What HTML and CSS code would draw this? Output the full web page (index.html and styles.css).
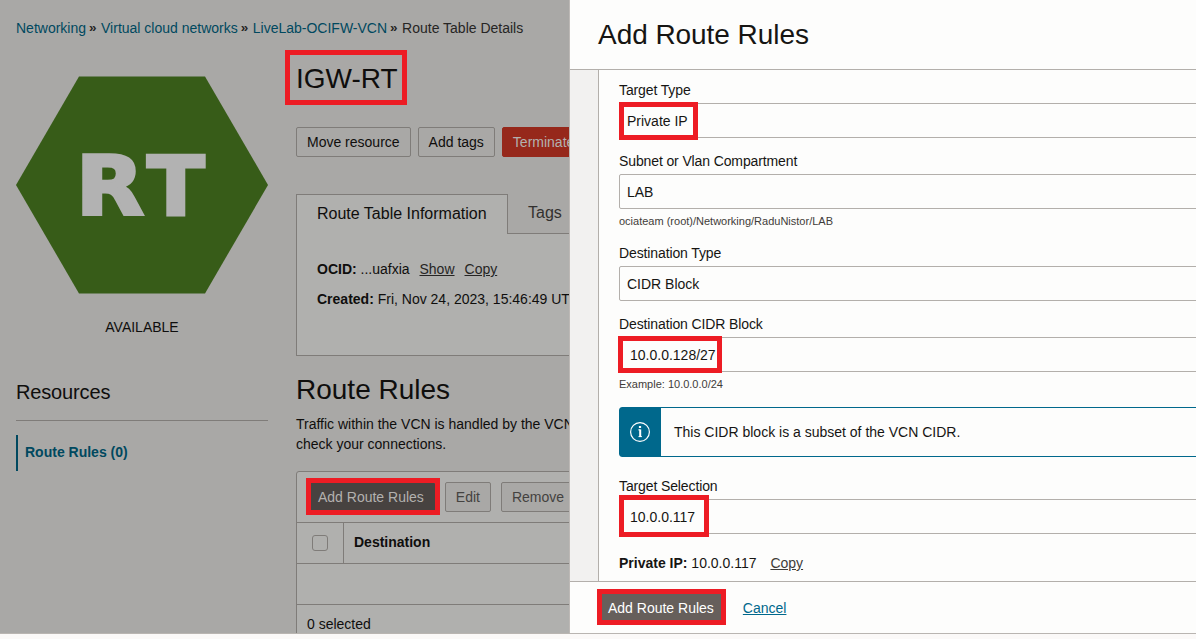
FILE: index.html
```html
<!DOCTYPE html>
<html lang="en">
<head>
<meta charset="utf-8">
<title>IGW-RT - Add Route Rules</title>
<link rel="stylesheet" href="styles.css">
</head>
<body>
<div class="screen">
  <div class="page">
    <nav class="crumbs"><a>Networking</a><i>»</i><a>Virtual cloud networks</a><i>»</i><a>LiveLab-OCIFW-VCN</a><i>»</i><span>Route Table Details</span></nav>
    <div class="columns">
      <aside class="side">
        <svg class="hex" width="252" height="218" viewBox="0 0 252 218">
          <path d="M63 .4H189L252 109 189 217.4H63L0 109Z" fill="#375c18"/>
          <text class="hex-text" y="138.5"><tspan x="59.8" textLength="68.4" lengthAdjust="spacingAndGlyphs">R</tspan><tspan x="131" textLength="57.6" lengthAdjust="spacingAndGlyphs">T</tspan></text>
        </svg>
        <div class="status">AVAILABLE</div>
        <h3 class="side-title">Resources</h3>
        <div class="side-item">Route Rules (0)</div>
      </aside>
      <main class="main">
        <h1 class="title"><span class="marked mark-title">IGW-RT</span></h1>
        <div class="actions">
          <button class="btn">Move resource</button>
          <button class="btn">Add tags</button>
          <button class="btn danger">Terminate</button>
        </div>
        <div class="tabs">
          <div class="tab active">Route Table Information</div>
          <div class="tab">Tags</div>
        </div>
        <div class="card">
          <p><b>OCID:</b> ...uafxia <a class="first">Show</a><a>Copy</a></p>
          <p><b>Created:</b> Fri, Nov 24, 2023, 15:46:49 UTC</p>
        </div>
        <h2 class="section">Route Rules</h2>
        <p class="desc">Traffic within the VCN is handled by the VCN<br>check your connections.</p>
        <div class="table">
          <div class="toolbar">
            <button class="btn dark marked mark-add">Add Route Rules</button>
            <button class="btn dim edit">Edit</button>
            <button class="btn dim remove">Remove</button>
          </div>
          <div class="thead">
            <div class="check-cell"><span class="check"></span></div>
            <div class="th">Destination</div>
          </div>
          <div class="empty"></div>
          <div class="selected">0 selected</div>
        </div>
      </main>
    </div>
  </div>
  <section class="drawer">
    <header class="drawer-head">Add Route Rules</header>
    <div class="drawer-body">
      <form class="form">
        <label>Target Type</label>
        <div class="field marked mark-type">Private IP</div>
        <label>Subnet or Vlan Compartment</label>
        <div class="field">LAB</div>
        <div class="hint">ociateam (root)/Networking/RaduNistor/LAB</div>
        <label>Destination Type</label>
        <div class="field">CIDR Block</div>
        <label>Destination CIDR Block</label>
        <div class="field input marked mark-cidr">10.0.0.128/27</div>
        <div class="hint example">Example: 10.0.0.0/24</div>
        <div class="info">
          <div class="info-icon">
            <svg width="22" height="22" viewBox="0 0 22 22" fill="none" stroke="#fff">
              <circle cx="11" cy="11" r="9.4" stroke-width="1.2"/>
              <path d="M11 5V7" stroke-width="2.2"/>
              <path d="M11.2 8.4V16" stroke-width="2"/>
              <path d="M9.3 8.9H11M9.5 15.6H12.9" stroke-width="1"/>
            </svg>
          </div>
          <div class="info-text">This CIDR block is a subset of the VCN CIDR.</div>
        </div>
        <label>Target Selection</label>
        <div class="field input marked mark-target">10.0.0.117</div>
        <div class="ip"><b>Private IP:</b> 10.0.0.117 <a>Copy</a></div>
      </form>
    </div>
    <footer class="drawer-foot">
      <button class="btn submit marked mark-submit">Add Route Rules</button>
      <a class="cancel">Cancel</a>
    </footer>
  </section>
  <div class="strip"></div>
</div>
</body>
</html>
```
FILE: styles.css
```css
*, *::after { box-sizing: border-box; }
body {
  margin: 0;
  font: 14px/20px "Liberation Sans", Arial, sans-serif;
  color: #161513;
  overflow: hidden;
}
h1, h2, h3, p { margin: 0; font-weight: 400; }

.screen {
  display: grid;
  grid-template: 633px 6px / 570px minmax(0, 1fr);
  width: 1196px;
  height: 639px;
}
.strip { grid-column: 1 / 3; background: #fbf9f8; border-top: 1px solid #b9b5b1; }

/* dimmed page */
.page {
  overflow: hidden;
  background: #a9a8a6;
  border-right: 1px solid #bdb9b6;
  color: #0f0e0d;
  white-space: nowrap;
  padding: 18px 0 0 16px;
}
.crumbs { display: flex; height: 20px; color: #262524; }
.crumbs a { color: #00485f; }
.crumbs i { width: 15px; padding-left: 3px; font: bold 13.5px/20px "Liberation Sans", Arial, sans-serif; }
.columns { display: grid; grid-template-columns: 252px 700px; column-gap: 28px; }

.side { padding-top: 38px; }
.hex { display: block; }
.hex-text { font: 700 82.3px "DejaVu Sans", Verdana, sans-serif; fill: #b2b2b2; stroke: #b2b2b2; stroke-width: 3; }
.status { margin-top: 23px; text-align: center; }
.side-title {
  height: 84px;
  padding-top: 43px;
  border-bottom: 1px solid #7f7c79;
  font-size: 20px;
  line-height: 24px;
  letter-spacing: -.15px;
}
.side-item {
  height: 36px;
  margin-top: 14px;
  padding-left: 7px;
  border-left: 2px solid #00485f;
  line-height: 35px;
  font-weight: 700;
  color: #00485f;
}

.title { padding-top: 25px; height: 89px; font-size: 28px; line-height: 32px; }
.actions { display: flex; gap: 7px; }
.btn {
  height: 30px;
  padding: 0 10px;
  border: 1px solid #7f7c79;
  border-radius: 2px;
  background: transparent;
  color: #0f0e0d;
  font: inherit;
}
.btn.danger { background: #96281b; border-color: #96281b; color: #b3b1af; }
.btn.dark { background: #474240; border-color: #474240; color: #b3b1af; }
.btn.dim { color: #444240; background: #a9a8a6; }

.tabs { display: flex; height: 40px; margin-top: 37px; font-size: 16px; }
.tab { flex: 1; padding: 9px 0 0 20px; border-bottom: 1px solid #7f7c79; color: #32302e; }
.tab.active {
  flex: none;
  width: 212px;
  border: 1px solid #7f7c79;
  border-bottom: 0;
  background: #b0b0ae;
  color: #0f0e0d;
}
.card {
  height: 122px;
  padding: 25px 20px 0;
  border: 1px solid #7f7c79;
  border-top: 0;
  background: #b0b0ae;
}
.card p { margin-bottom: 10px; }
.card a { margin-left: 10px; color: #262524; text-decoration: underline; }
.card a.first { margin-left: 6px; }
.section { padding-top: 18px; height: 58px; font-size: 28px; line-height: 32px; }

.table { margin-top: 17px; height: 180px; border: 1px solid #7f7c79; border-radius: 3px 0 0 0; background: #b0b0ae; }
.toolbar { display: flex; height: 51px; padding: 10px 0 0 10px; border-bottom: 1px solid #7f7c79; }
.edit { margin-left: 10px; }
.remove { margin-left: 10px; }
.thead { display: flex; height: 41px; border-bottom: 1px solid #7f7c79; }
.check-cell { width: 47px; padding: 12px 15px; border-right: 1px solid #7f7c79; }
.check { display: block; width: 16px; height: 16px; border: 1px solid #7f7c79; border-radius: 3px; }
.th { padding: 9px 10px; font-weight: 700; }
.empty { height: 41px; border-bottom: 1px solid #7f7c79; }
.selected { padding: 9px 10px; }

/* drawer */
.drawer { display: grid; grid-template-rows: 70px 511px 52px; background: #fdfdfc; overflow: hidden; }
.drawer-head { padding: 19px 0 0 28px; font-size: 28px; line-height: 32px; letter-spacing: -.05px; border-bottom: 1px solid #b3afab; }
.drawer-body { padding-left: 28px; background: #f2f1f0; overflow: hidden; }
.form { height: 511px; padding: 10px 0 0 20px; border-left: 1px solid #b3afab; background: #fdfdfc; white-space: nowrap; }
label { display: block; height: 23px; letter-spacing: -.12px; }
.field {
  width: 620px;
  height: 35px;
  margin-bottom: 13px;
  padding-left: 7px;
  border: 1px solid #b3afab;
  border-radius: 2px;
  line-height: 34px;
}
.input { padding-left: 10px; }
.hint { height: 31px; margin-top: -10px; padding-top: 1px; font-size: 11px; line-height: 17px; color: #3f3c39; }
.example { height: 22px; }
.info { display: flex; width: 620px; height: 50px; margin: 10px 0 19px; border: 1px solid #00688c; border-radius: 3px; }
.info-icon { display: grid; place-items: center; width: 41px; padding-right: 1px; background: #00688c; }
.info-text { padding-left: 13px; line-height: 49px; }
.ip { padding-top: 6px; }
.ip a { margin-left: 10px; color: #3f3c39; text-decoration: underline; }
.drawer-foot { display: flex; padding: 11px 0 0 28px; border-top: 1px solid #b3afab; }
.submit { padding: 0 10px 0 9px; background: #665f5b; border-color: #665f5b; color: #fff; }
.cancel { margin: 5px 0 0 18px; color: #00688c; text-decoration: underline; }

/* red annotation frames drawn over the marked elements */
.marked { position: relative; }
.marked::after { content: ""; position: absolute; border: 5px solid #ed1c24; }
.mark-title::after { left: -11px; top: -13px; width: 122px; height: 55px; }
.mark-add::after { left: -2px; top: -5px; width: 134px; height: 37px; }
.mark-type::after { left: -1px; top: -2px; width: 79px; height: 38px; }
.mark-cidr::after { left: -2px; top: -2px; width: 104px; height: 37px; }
.mark-target::after { left: -1px; top: -5px; width: 90px; height: 42px; }
.mark-submit::after { left: -2px; top: -5px; width: 129px; height: 36px; }
```
